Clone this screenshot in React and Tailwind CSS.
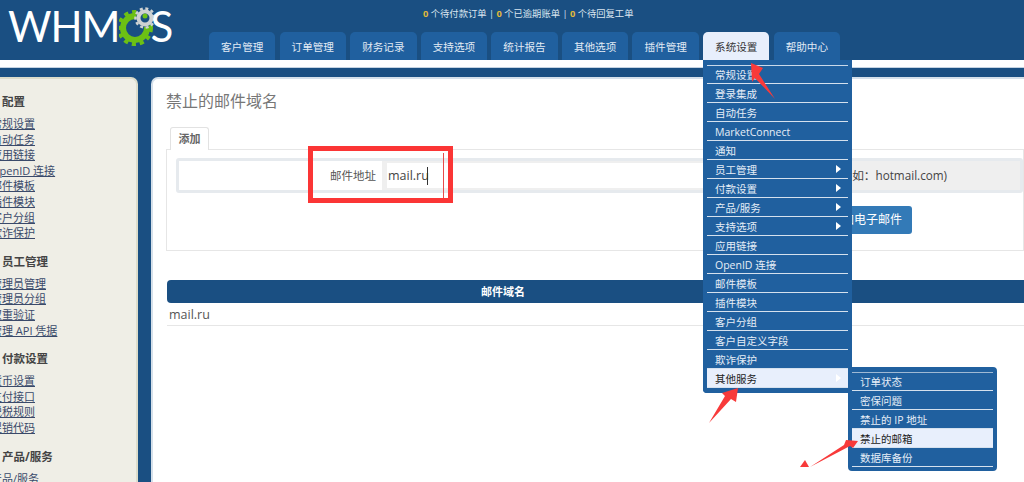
const font = { fontFamily: '"Open Sans","Noto Sans CJK SC",sans-serif' };

const tabs = ["客户管理","订单管理","财务记录","支持选项","统计报告","其他选项","插件管理","系统设置","帮助中心"];
const sidebar = [
  { title: "配置", links: ["常规设置","自动任务","应用链接","OpenID 连接","邮件模板","插件模块","客户分组","欺诈保护"] },
  { title: "员工管理", links: ["管理员管理","管理员分组","双重验证","管理 API 凭据"] },
  { title: "付款设置", links: ["货币设置","支付接口","税税规则","促销代码"] },
  { title: "产品/服务", links: ["产品/服务"] },
];
const menu = [
  ["常规设置"],["登录集成"],["自动任务"],["MarketConnect"],["通知"],["员工管理",1],["付款设置",1],["产品/服务",1],["支持选项",1],
  ["应用链接"],["OpenID 连接"],["邮件模板"],["插件模块"],["客户分组"],["客户自定义字段"],["欺诈保护"],["其他服务",1,1],
];
const submenu = [["订单状态"],["密保问题"],["禁止的 IP 地址"],["禁止的邮箱",0,1],["数据库备份"]];

function Row({ label, arrow, active, first }) {
  return (
    <div className={`relative border-b-[1.5px] border-[#d5e1ee] pl-2 text-[10.5px] ${first ? "h-[18px] leading-[18px]" : "h-[19px] leading-[20px]"} ${active ? "bg-[#e8effc] text-[#222]" : "text-[#e6eef7]"}`}>
      {label}
      {arrow ? <span className="absolute right-[7px] top-[5px] h-0 w-0 border-y-[4px] border-l-[5px] border-y-transparent border-l-white" /> : null}
    </div>
  );
}

function Logo() {
  return (
    <div className="relative ml-[8px] mt-[4px] flex h-[44px] w-[170px] items-center text-[42px] font-normal leading-none text-white" style={{ fontFamily: '"Lato",sans-serif' }}>
      <span className="tracking-[-1px]">WHM</span>
      <svg className="ml-[-1px] h-[44px] w-[36px]" viewBox="0 0 36 44">
        <circle cx="16" cy="24" r="12" fill="none" stroke="#6cc014" strokeWidth="6" />
        <circle cx="16" cy="24" r="16" fill="none" stroke="#6cc014" strokeWidth="4" strokeDasharray="4.2 3.8" />
        <circle cx="26" cy="14" r="9" fill="#1a4f82" />
        <circle cx="26" cy="14" r="6.5" fill="none" stroke="#cfd2d2" strokeWidth="4" />
        <circle cx="26" cy="14" r="9.5" fill="none" stroke="#cfd2d2" strokeWidth="2.5" strokeDasharray="3 2.6" />
        <circle cx="26" cy="12" r="2.5" fill="#6cc014" />
      </svg>
      <span className="ml-[-4px]">S</span>
    </div>
  );
}

export default function App() {
  return (
    <div className="relative flex h-[482px] w-[1024px] flex-col overflow-hidden bg-[#1a4f82]" style={font}>
      <header className="relative h-[60px] shrink-0 bg-[#1a4f82]">
        <div className="absolute left-0 top-0"><Logo /></div>
        <div className="pl-[423px] pt-[7px] text-[9.3px] leading-[13px] text-[#dbe6f0]">
          <b className="font-bold text-[#e0b93a]">0</b> 个待付款订单 | <b className="font-bold text-[#e0b93a]">0</b> 个已逾期账单 | <b className="font-bold text-[#e0b93a]">0</b> 个待回复工单
        </div>
        <nav className="absolute bottom-0 left-[209px] flex gap-[4.2px]">
          {tabs.map((t) => (
            <div key={t} className={`h-[28px] w-[66.4px] rounded-t-[5px] text-center text-[10.6px] leading-[30px] ${t === "系统设置" ? "bg-[#e8effc] text-[#333]" : "bg-[#20609f] text-[#e2ebf5]"}`}>{t}</div>
          ))}
        </nav>
      </header>
      <div className="h-[8px] shrink-0 border-b border-[#c5d3e2] bg-white" />
      <main className="mt-[9px] flex min-h-0 flex-1 gap-[13px]">
        <aside className="ml-[-16px] w-[154px] shrink-0 rounded-tr-[7px] border-r-2 border-t-2 border-[#dcdccb] bg-[#efeee6] pl-[7px] pt-[15px]">
          {sidebar.map((s) => (
            <div key={s.title} className="mb-[13px]">
              <div className="mb-[6px] pl-[11px] text-[11.5px] font-bold leading-[16px] text-[#444]">{s.title}</div>
              {s.links.map((l) => (
                <div key={l} className="h-[15.6px] text-[11px] leading-[15.6px] text-[#3a4a6a] underline">{l}</div>
              ))}
            </div>
          ))}
        </aside>
        <section className="min-w-0 flex-1 rounded-tl-[7px] border-l-2 border-t-2 border-[#d5e0ea] bg-white pl-[13px] pt-[11px]">
          <h1 className="text-[16px] font-normal leading-[22px] text-[#777]">禁止的邮件域名</h1>
          <div className="relative z-10 ml-[4px] mt-[15px] h-[23px] w-[39px] rounded-t-[3px] border-x border-t border-[#e2e2e2] bg-white text-center text-[11px] font-bold leading-[22px] text-[#666]">添加</div>
          <div className="-mt-px h-[102px] border border-[#e6e6e6] pl-[9px] pt-[8px]">
            <div className="flex h-[35px] rounded-[3px] border-[3px] border-[#e6eaee] bg-white">
              <div className="w-[203px] shrink-0 pr-[6px] text-right text-[11.5px] leading-[30px] text-[#555]">邮件地址</div>
              <div className="flex flex-1 items-center bg-[#efefef]">
                <div className="relative ml-[5px] h-[25px] w-[450px] shrink-0 bg-white pl-[1px] text-[12.5px] leading-[25px] text-[#444]">
                  mail.ru
                  <span className="absolute left-[40px] top-[4px] h-[18px] w-px bg-[#333]" />
                </div>
                <span className="whitespace-nowrap text-[11.7px] text-[#444]">(例如：hotmail.com)</span>
              </div>
            </div>
            <button className="ml-[644px] mt-[13px] h-[28px] w-[92px] rounded-[3px] bg-[#337ab7] text-[12px] text-white">添加电子邮件</button>
          </div>
          <div className="ml-px mt-[29px] grid h-[23px] grid-cols-[672px_1fr] rounded-l-[4px] bg-[#1a4f82] text-center text-[11px] font-bold leading-[23px] text-white">
            <div>邮件域名</div>
            <div />
          </div>
          <div className="ml-px h-[23px] border-b border-[#e6e6e6] pl-[2px] text-[12.5px] leading-[23px] text-[#555]">mail.ru</div>
        </section>
      </main>

      <div className="absolute left-[703px] top-[60px] h-[333px] w-[149px] rounded-b-[4px] border-x-[4px] border-b-[4px] border-[#20609f] bg-[#20609f]">
        <div className="mt-[5px] border-t-[1.5px] border-[#c9d9ea]">
          {menu.map(([l, a, act], i) => <Row key={l} label={l} arrow={a} active={act} first={i === 0} />)}
        </div>
      </div>
      <div className="absolute left-[848px] top-[367px] h-[104px] w-[149px] rounded-[4px] border-[4px] border-[#20609f] bg-[#20609f]">
        <div className="mt-[1px] border-t-[1.5px] border-[#9fb9d4]">
          {submenu.map(([l, a, act], i) => <Row key={l} label={l} arrow={a} active={act} first={i === 0} />)}
        </div>
      </div>

      <div className="pointer-events-none absolute left-[308px] top-[146px] h-[57px] w-[145px] border-[5.5px] border-[#fb3535]" />
      <div className="pointer-events-none absolute left-[443px] top-[153px] h-[45px] w-px bg-[#e84a4a]" />
      <svg className="pointer-events-none absolute left-0 top-0 h-[482px] w-[1024px]" viewBox="0 0 1024 482">
        <polygon points="751,63 763,68 759,74 775,99 755,78 752,82" fill="#f83a3a" />
        <polygon points="738,388 736,402 731,399 709,423 725,396 722,393" fill="#f83a3a" />
        <polygon points="858,441 853,448 850,446 810,467 844,445 846,440" fill="#f83a3a" />
        <polygon points="800,467 805,460 809,467" fill="#f83a3a" />
      </svg>
    </div>
  );
}
